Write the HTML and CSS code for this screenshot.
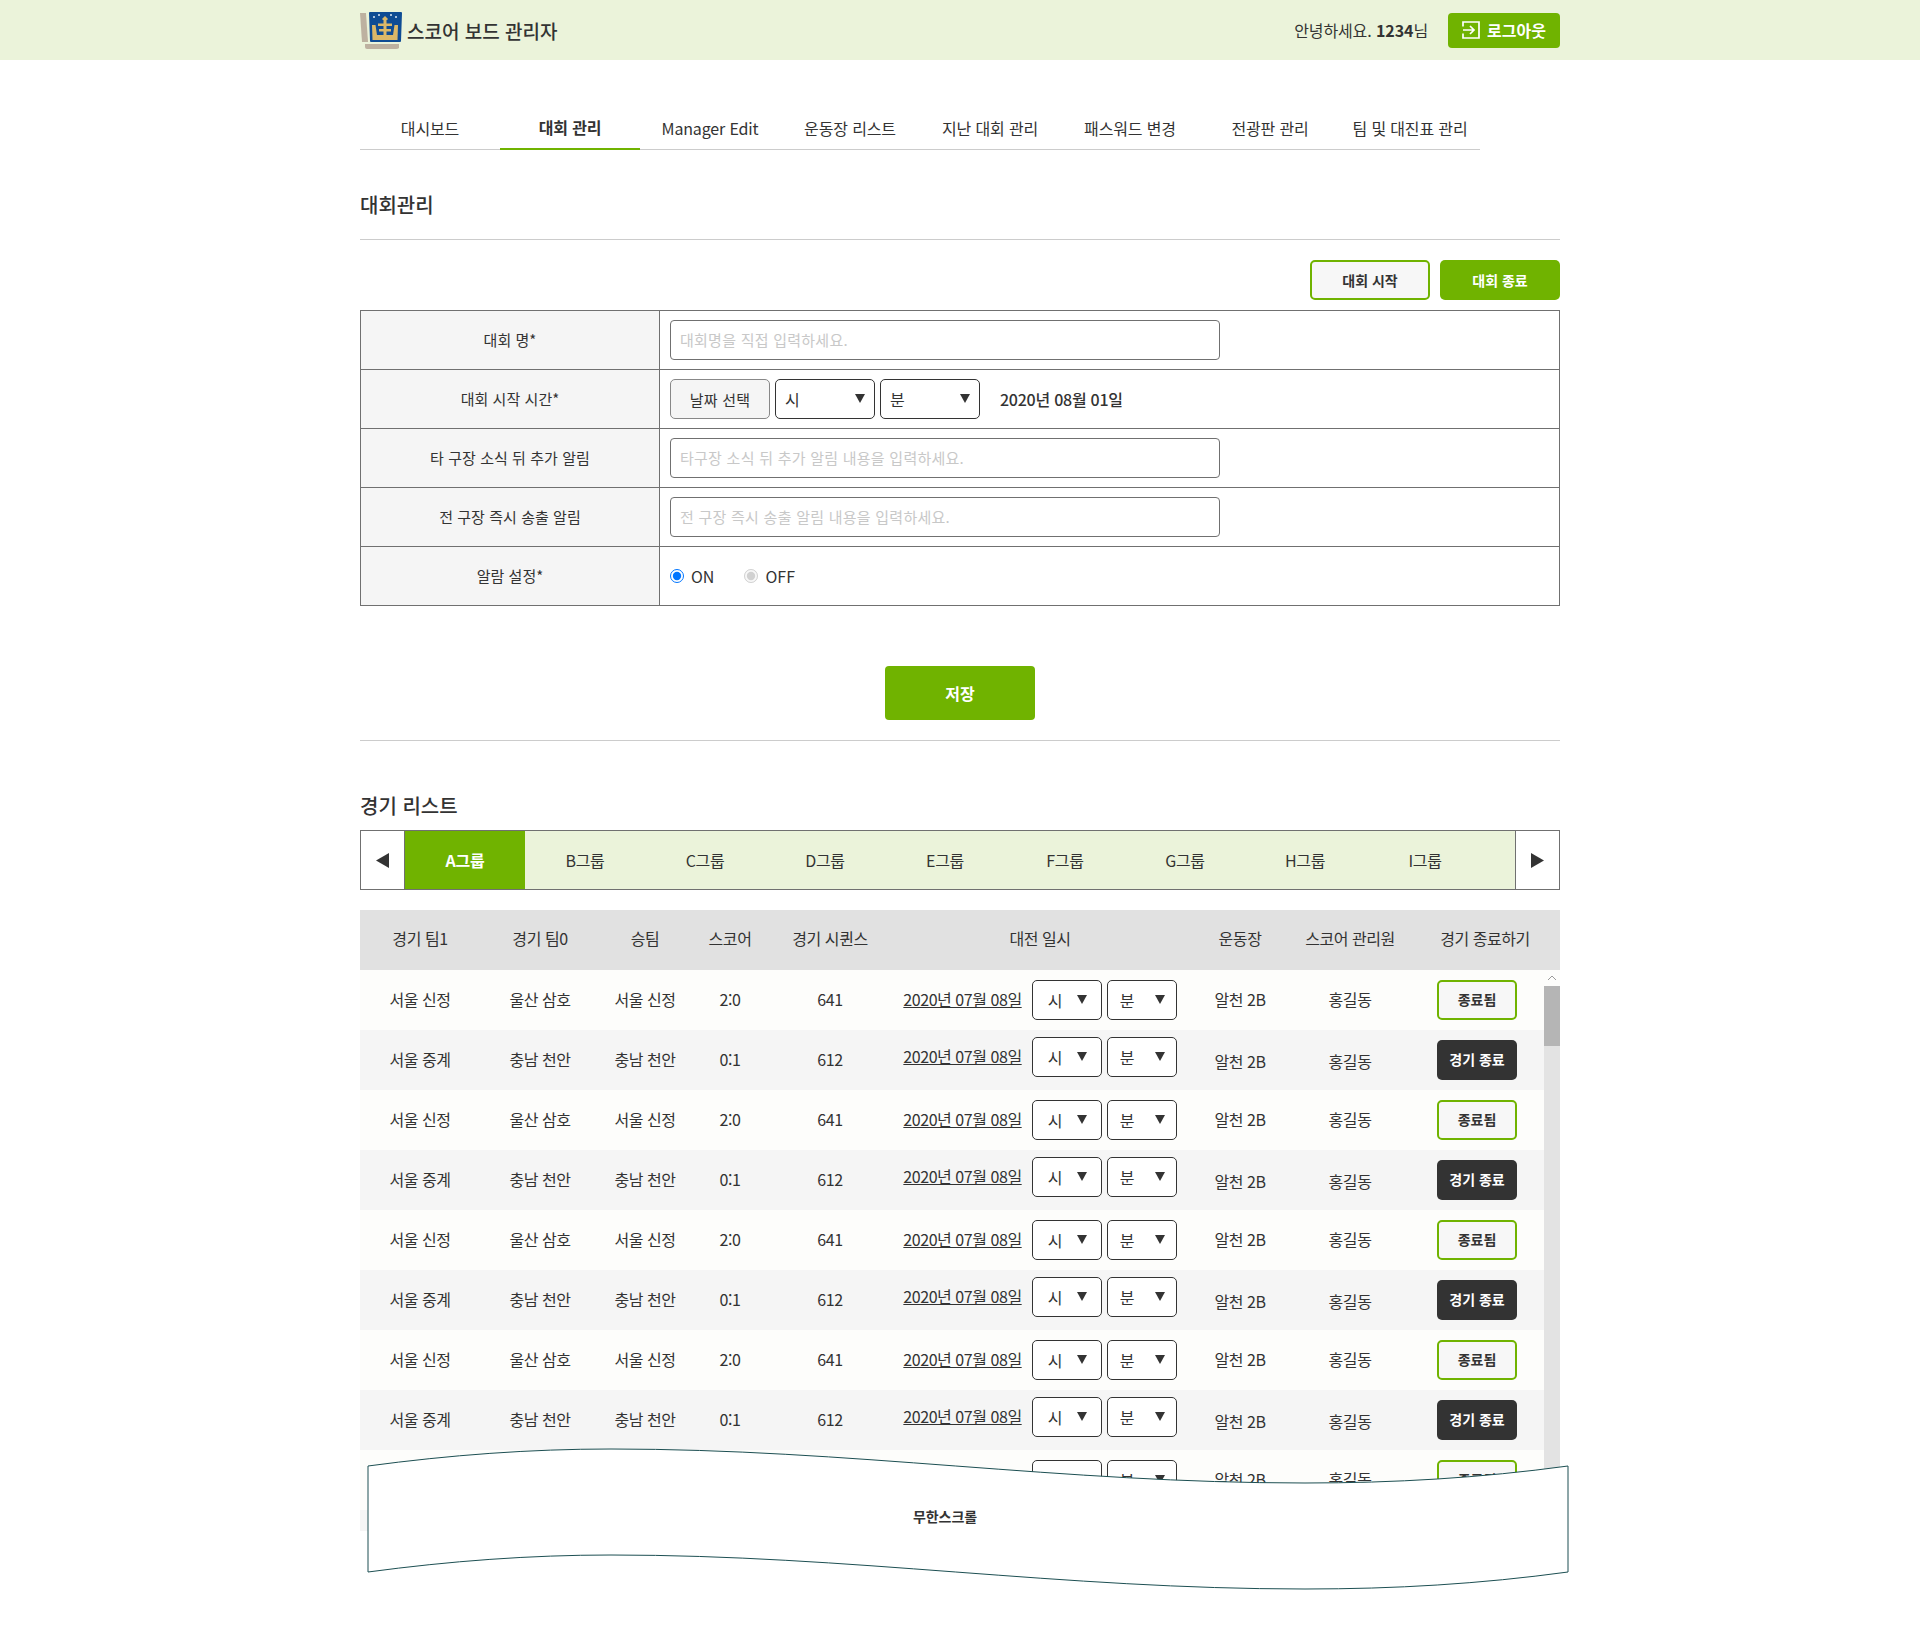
FILE: index.html
```html
<!DOCTYPE html>
<html lang="ko">
<head>
<meta charset="utf-8">
<title>스코어 보드 관리자</title>
<link rel="stylesheet" href="styles.css">
</head>
<body>
<header class="topbar">
  <div class="wrap topbar-in">
    <div class="brand">
      <svg class="logo" viewBox="0 0 42 37" width="42" height="37" aria-hidden="true">
        <path d="M0 1 L6 1 L8 30 L2 30 Z" fill="#bdb1a0"/>
        <path d="M5 32 L39 32 L39 36 Q38 37 36 37 L7 37 Q5 37 5 35 Z" fill="#bdb1a0"/>
        <path d="M9 1 Q9 0 10 0 L41 0 Q42 0 42 1 L41 29 Q41 30 40 30 L11 30 Q10 30 10 29 Z" fill="#0f4c94"/>
        <path d="M25 4 L28 7 L25 10 L22 7 Z" fill="#dcb868"/>
        <path d="M23.500 9 H26.500 V24 H23.500 Z M18 11.500 H32 V14 H18 Z M19 17 H31 V19.500 H19 Z" fill="#dcb868"/>
        <path d="M12 13 L15.500 13 L17 23 L33 23 L34.500 13 L38 13 L37.500 28 L12.500 28 Z" fill="#dcb868"/>
        <circle cx="14" cy="5" r="1" fill="#dfe8f5"/><circle cx="19" cy="3" r="1" fill="#dfe8f5"/><circle cx="31" cy="3" r="1" fill="#dfe8f5"/><circle cx="36" cy="5" r="1" fill="#dfe8f5"/>
      </svg>
      <span class="brand-name">스코어 보드 관리자</span>
    </div>
    <div class="user">
      <span class="greet">안녕하세요. <b>1234</b>님</span>
      <a class="logout">
        <svg viewBox="0 0 18 18" width="18" height="18" aria-hidden="true"><path d="M1 5.500 V1 H17 V17 H1 V12.500 M1 9 H11.500 M8 5 L12 9 L8 13" fill="none" stroke="#fff" stroke-width="1.700"/></svg>
        로그아웃
      </a>
    </div>
  </div>
</header>

<main class="wrap">
  <nav class="tabs">
    <a>대시보드</a><a class="on">대회 관리</a><a>Manager Edit</a><a>운동장 리스트</a><a>지난 대회 관리</a><a>패스워드 변경</a><a>전광판 관리</a><a>팀 및 대진표 관리</a>
  </nav>

  <h2 class="title ruled">대회관리</h2>

  <div class="actions">
    <button class="btn outline">대회 시작</button>
    <button class="btn solid">대회 종료</button>
  </div>

  <table class="form">
    <tr><th>대회 명*</th><td><input class="field" placeholder="대회명을 직접 입력하세요."></td></tr>
    <tr><th>대회 시작 시간*</th><td>
      <div class="timeline">
        <button class="pick">날짜 선택</button>
        <select class="sel big"><option>시</option></select>
        <select class="sel big"><option>분</option></select>
        <b class="picked">2020년 08월 01일</b>
      </div>
    </td></tr>
    <tr><th>타 구장 소식 뒤 추가 알림</th><td><input class="field" placeholder="타구장 소식 뒤 추가 알림 내용을 입력하세요."></td></tr>
    <tr><th>전 구장 즉시 송출 알림</th><td><input class="field" placeholder="전 구장 즉시 송출 알림 내용을 입력하세요."></td></tr>
    <tr><th>알람 설정*</th><td>
      <div class="radios">
        <label class="radio"><input type="radio" name="alarm" checked>ON</label>
        <label class="radio"><input type="radio" name="alarmoff" checked disabled>OFF</label>
      </div>
    </td></tr>
  </table>

  <div class="save-row"><button class="save">저장</button></div>

  <h2 class="title list-title">경기 리스트</h2>

  <div class="groups">
    <button class="arrow"><svg viewBox="0 0 13 15" width="13" height="15" aria-hidden="true"><path d="M13 0 V15 L0 7.500 Z" fill="#333"/></svg></button>
    <div class="group-list">
      <a class="on">A그룹</a><a>B그룹</a><a>C그룹</a><a>D그룹</a><a>E그룹</a><a>F그룹</a><a>G그룹</a><a>H그룹</a><a>I그룹</a>
    </div>
    <button class="arrow"><svg viewBox="0 0 13 15" width="13" height="15" aria-hidden="true"><path d="M0 0 V15 L13 7.500 Z" fill="#333"/></svg></button>
  </div>

  <div class="board">
    <div class="row head">
      <span>경기 팀1</span><span>경기 팀0</span><span>승팀</span><span>스코어</span><span>경기 시퀸스</span><span>대전 일시</span><span>운동장</span><span>스코어 관리원</span><span>경기 종료하기</span>
    </div>
    <div class="scroller">
      <div class="rows">
        <div class="row"><span>서울 신정</span><span>울산 삼호</span><span>서울 신정</span><span>2:0</span><span>641</span><span class="when"><u>2020년 07월 08일</u><select class="sel hh"><option>시</option></select><select class="sel mm"><option>분</option></select></span><span class="venue">알천 2B</span><span class="venue">홍길동</span><span><button class="done">종료됨</button></span></div>
        <div class="row alt"><span>서울 중계</span><span>충남 천안</span><span>충남 천안</span><span>0:1</span><span>612</span><span class="when"><u>2020년 07월 08일</u><select class="sel hh"><option>시</option></select><select class="sel mm"><option>분</option></select></span><span class="venue">알천 2B</span><span class="venue">홍길동</span><span><button class="finish">경기 종료</button></span></div>
        <div class="row"><span>서울 신정</span><span>울산 삼호</span><span>서울 신정</span><span>2:0</span><span>641</span><span class="when"><u>2020년 07월 08일</u><select class="sel hh"><option>시</option></select><select class="sel mm"><option>분</option></select></span><span class="venue">알천 2B</span><span class="venue">홍길동</span><span><button class="done">종료됨</button></span></div>
        <div class="row alt"><span>서울 중계</span><span>충남 천안</span><span>충남 천안</span><span>0:1</span><span>612</span><span class="when"><u>2020년 07월 08일</u><select class="sel hh"><option>시</option></select><select class="sel mm"><option>분</option></select></span><span class="venue">알천 2B</span><span class="venue">홍길동</span><span><button class="finish">경기 종료</button></span></div>
        <div class="row"><span>서울 신정</span><span>울산 삼호</span><span>서울 신정</span><span>2:0</span><span>641</span><span class="when"><u>2020년 07월 08일</u><select class="sel hh"><option>시</option></select><select class="sel mm"><option>분</option></select></span><span class="venue">알천 2B</span><span class="venue">홍길동</span><span><button class="done">종료됨</button></span></div>
        <div class="row alt"><span>서울 중계</span><span>충남 천안</span><span>충남 천안</span><span>0:1</span><span>612</span><span class="when"><u>2020년 07월 08일</u><select class="sel hh"><option>시</option></select><select class="sel mm"><option>분</option></select></span><span class="venue">알천 2B</span><span class="venue">홍길동</span><span><button class="finish">경기 종료</button></span></div>
        <div class="row"><span>서울 신정</span><span>울산 삼호</span><span>서울 신정</span><span>2:0</span><span>641</span><span class="when"><u>2020년 07월 08일</u><select class="sel hh"><option>시</option></select><select class="sel mm"><option>분</option></select></span><span class="venue">알천 2B</span><span class="venue">홍길동</span><span><button class="done">종료됨</button></span></div>
        <div class="row alt"><span>서울 중계</span><span>충남 천안</span><span>충남 천안</span><span>0:1</span><span>612</span><span class="when"><u>2020년 07월 08일</u><select class="sel hh"><option>시</option></select><select class="sel mm"><option>분</option></select></span><span class="venue">알천 2B</span><span class="venue">홍길동</span><span><button class="finish">경기 종료</button></span></div>
        <div class="row"><span>서울 신정</span><span>울산 삼호</span><span>서울 신정</span><span>2:0</span><span>641</span><span class="when"><u>2020년 07월 08일</u><select class="sel hh"><option>시</option></select><select class="sel mm"><option>분</option></select></span><span class="venue">알천 2B</span><span class="venue">홍길동</span><span><button class="done">종료됨</button></span></div>
        <div class="row alt"></div>
      </div>
      <div class="scrollbar">
        <div class="sb-up"><svg viewBox="0 0 10 6" width="10" height="6" aria-hidden="true"><path d="M1 5 L5 1 L9 5" fill="none" stroke="#9a9a9a"/></svg></div>
        <div class="sb-thumb"></div>
      </div>
    </div>
    <div class="wave">
      <svg viewBox="0 0 1202 142" width="1202" height="142" aria-hidden="true">
        <path d="M1 18 C83 7 163 1 244 1 C483 1 693 35 938 35 C1028 35 1113 30 1201 18 V124 C1113 136 1028 141 938 141 C693 141 483 107 244 107 C163 107 83 113 1 124 Z" fill="#fff" stroke="#1c4f52"/>
      </svg>
      <span class="wave-text">무한스크롤</span>
    </div>
  </div>
</main>
</body>
</html>
```
FILE: styles.css
```css
* { box-sizing: border-box; }
html, body { margin: 0; padding: 0; }
body {
  min-height: 1650px;
  background: #fff;
  color: #333;
  font-family: "Noto Sans CJK KR", "Noto Sans", sans-serif;
  font-size: 15px;
}
button, input, select { font-family: inherit; color: inherit; }
.wrap { width: 1200px; margin: 0 auto; }

.topbar { height: 60px; background: #ebf3da; }
.topbar-in { height: 100%; display: flex; align-items: center; justify-content: space-between; }
.brand { display: flex; align-items: center; gap: 5px; }
.logo { display: block; }
.brand-name { font-size: 19px; font-weight: 500; }
.user { display: flex; align-items: center; gap: 20px; }
.greet { font-size: 16px; letter-spacing: -0.1px; }
.greet b { font-weight: 700; }
.logout {
  width: 112px; height: 35px; border-radius: 4px;
  background: #70b300; color: #fff;
  font-size: 16px; font-weight: 700;
  display: flex; align-items: center; justify-content: center; gap: 7px;
}

.tabs { width: 1120px; margin-top: 40px; display: flex; height: 50px; border-bottom: 1px solid #ccc; }
.tabs a { width: 140px; display: flex; align-items: center; justify-content: center; font-size: 16px; letter-spacing: -0.15px; height: 50px; padding-top: 5px; }
.tabs a.on { border-bottom: 2px solid #70b300; font-weight: 700; }

.title { margin: 0; font-size: 20px; font-weight: 500; line-height: 30px; }
.ruled { margin-top: 40px; padding-bottom: 19px; border-bottom: 1px solid #ccc; }

.actions { margin-top: 20px; display: flex; justify-content: flex-end; gap: 10px; }
.btn { width: 120px; height: 40px; border-radius: 5px; font-size: 14px; font-weight: 700; }
.btn.outline { background: #f7f7f7; border: 2px solid #70b300; }
.btn.solid { background: #70b300; border: 0; color: #fff; }

.form { margin-top: 10px; width: 1200px; border-collapse: collapse; border: 1px solid #707070; table-layout: fixed; }
.form tr { height: 59px; }
.form th { width: 299px; background: #f5f5f5; border: 1px solid #707070; font-weight: 400; font-size: 15px; letter-spacing: 0.05px; padding: 0 0 2px; }
.form td { border: 1px solid #707070; padding: 0 0 0 10px; }
.field {
  display: block; width: 550px; height: 40px;
  border: 1px solid #707070; border-radius: 4px; padding: 0 9px 2px; font-size: 15px; letter-spacing: 0.25px; background: #fff;
}
.field::placeholder { color: #c8c8c8; opacity: 1; }
.timeline { display: flex; align-items: center; gap: 5px; }
.pick { width: 100px; height: 40px; background: #f5f5f5; border: 1px solid #888; border-radius: 5px; font-size: 15px; letter-spacing: 0.2px; }
.sel {
  appearance: none; -webkit-appearance: none;
  height: 40px; border: 1px solid #333; border-radius: 5px; font-size: 16px;
  background: #fff url("data:image/svg+xml,%3Csvg xmlns='http://www.w3.org/2000/svg' width='10' height='9'%3E%3Cpath d='M0 0H10L5 9Z' fill='%23333'/%3E%3C/svg%3E") no-repeat;
}
.sel.big { width: 100px; padding-left: 9px; background-position: 79px 14px; }
.sel.hh { width: 70px; padding-left: 15px; background-position: 44px 14px; }
.sel.mm { width: 70px; padding-left: 12px; background-position: 47px 14px; }
.picked { font-weight: 500; margin-left: 15px; font-size: 16px; letter-spacing: -0.25px; }
.radios { display: flex; align-items: center; gap: 30px; }
.radio { display: flex; align-items: center; gap: 7px; font-size: 16px; }
.radio input { width: 14px; height: 14px; margin: 0; }

.save-row { margin-top: 60px; padding-bottom: 20px; border-bottom: 1px solid #ccc; display: flex; justify-content: center; }
.save { width: 150px; height: 54px; border: 0; border-radius: 4px; background: #70b300; color: #fff; font-size: 16px; font-weight: 700; }

.list-title { margin-top: 50px; }

.groups { margin-top: 9px; height: 60px; display: flex; border: 1px solid #707070; background: #ebf3da; }
.arrow { width: 44px; padding: 0; border: 0; background: #fff; display: flex; align-items: center; justify-content: center; }
.arrow:first-child { border-right: 1px solid #707070; }
.arrow:last-child { border-left: 1px solid #707070; }
.group-list { flex: 1; display: flex; }
.group-list a { width: 120px; display: flex; align-items: center; justify-content: center; font-size: 16px; letter-spacing: -0.3px; padding-bottom: 1px; }
.group-list a.on { background: #70b300; color: #fff; font-weight: 700; }

.board { margin-top: 20px; position: relative; }
.row {
  display: grid; grid-template-columns: 120px 120px 90px 80px 120px 300px 100px 120px 1fr;
  height: 60px; background: #fdfdfb; font-size: 16px; letter-spacing: -0.45px;
}
.row > span { display: flex; align-items: center; justify-content: center; white-space: nowrap; padding-bottom: 2px; }
.row > span:last-child { padding-bottom: 0; }
.row.alt { background: #f5f5f5; }
.row.head { background: #e1e1e1; }
.row.head > span { padding-bottom: 4px; }
.scroller { display: flex; height: 561px; overflow: hidden; }
.rows { flex: 1; min-width: 0; }
.row > .when { padding-bottom: 0; }
.when u { margin-right: 10px; margin-bottom: 2px; }
.row > .when .sel + .sel { margin-left: 5px; }
.row.alt > .when { padding-bottom: 6px; }
.row.alt > .venue { padding-top: 1px; padding-bottom: 0; }
.done, .finish { width: 80px; height: 40px; border-radius: 5px; font-size: 14px; font-weight: 700; letter-spacing: 0; padding: 0 0 2px; }
.done { background: #f7f7f7; border: 2px solid #70b300; }
.finish { background: #333; border: 0; color: #fff; }

.scrollbar { width: 16px; background: #e3e3e3; }
.sb-up { height: 16px; background: #fdfdfb; display: flex; align-items: center; justify-content: center; }
.sb-up svg { display: block; }
.sb-thumb { height: 60px; background: #b5b5b5; }

.wave { position: absolute; left: 7px; top: 538px; width: 1202px; height: 142px; }
.wave svg { display: block; }
.wave-text { position: absolute; left: 0; top: 58px; width: 1156px; text-align: center; font-size: 14px; font-weight: 700; letter-spacing: -0.1px; }
```
